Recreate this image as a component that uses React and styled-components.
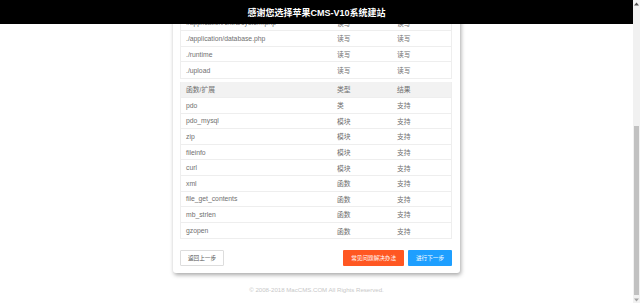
import React from "react";
import styled, { createGlobalStyle } from "styled-components";

const GlobalStyle = createGlobalStyle`
  html, body {
    margin: 0;
    padding: 0;
    background: #fff;
    overflow: hidden;
  }
  body {
    font-family: "Liberation Sans", "Noto Sans CJK SC", sans-serif;
  }
`;

const Page = styled.div`
  display: flex;
  width: 640px;
  height: 303px;
  overflow: hidden;
`;

const Main = styled.div`
  position: relative;
  flex: 1;
  display: flex;
  flex-direction: column;
  align-items: center;
  overflow: hidden;
`;

const TopBar = styled.div`
  position: absolute;
  top: 0;
  left: 0;
  right: 0;
  height: 24px;
  background: #000;
  color: #fff;
  display: flex;
  align-items: center;
  justify-content: center;
  font-size: 9px;
  font-weight: bold;
  z-index: 10;
`;

const Card = styled.div`
  width: 287px;
  box-sizing: border-box;
  background: #fff;
  padding: 15.6px 8px 7px 7px;
  border-radius: 0 0 3px 3px;
  box-shadow: 1px 2px 4px rgba(0, 0, 0, 0.35);
  display: flex;
  flex-direction: column;
`;

const Table = styled.div`
  display: flex;
  flex-direction: column;
  border: 1px solid #eee;
  border-top: none;
  margin-bottom: ${({ $gap }) => $gap || 0}px;
`;

const Row = styled.div`
  display: grid;
  grid-template-columns: 151px 60px 1fr;
  align-items: center;
  height: ${({ $head }) => ($head ? 16 : 15.6)}px;
  box-sizing: border-box;
  padding-left: 5px;
  border-bottom: 1px solid #eee;
  background: ${({ $head }) => ($head ? "#f2f2f2" : "#fff")};
  font-size: 6.8px;
  color: #707070;
  &:last-child {
    border-bottom: none;
  }
`;

const Cell = styled.span`
  white-space: nowrap;
`;

const Actions = styled.div`
  display: flex;
  align-items: center;
  gap: 4px;
  margin-top: -1px;
`;

const Button = styled.div`
  height: 16px;
  box-sizing: border-box;
  padding: 0 ${({ $pad }) => $pad}px;
  display: flex;
  align-items: center;
  font-size: 5.6px;
  border-radius: 1px;
  color: ${({ $tone }) => ($tone === "plain" ? "#555" : "#fff")};
  background: ${({ $tone }) =>
    $tone === "warm" ? "#ff5722" : $tone === "normal" ? "#1e9fff" : "#fff"};
  border: 1px solid ${({ $tone }) => ($tone === "plain" ? "#ddd" : "transparent")};
  margin-left: ${({ $push }) => ($push ? "auto" : "0")};
`;

const Footer = styled.div`
  margin-top: 13px;
  font-size: 6.1px;
  color: #c8c8c8;
`;

const ScrollBar = styled.div`
  width: 7px;
  background: #f1f1f1;
  display: flex;
  flex-direction: column;
  align-items: center;
`;

const Arrow = styled.div`
  height: 7px;
  display: flex;
  align-items: center;
  justify-content: center;
`;

const Track = styled.div`
  flex: 1;
  width: 100%;
  display: flex;
  flex-direction: column;
  justify-content: flex-end;
  align-items: center;
  padding-bottom: 1px;
`;

const Thumb = styled.div`
  width: 5px;
  height: 169px;
  background: #c1c1c1;
`;

const dirRows = [
  ["./application/extra/system.php", "读写", "读写"],
  ["./application/database.php", "读写", "读写"],
  ["./runtime", "读写", "读写"],
  ["./upload", "读写", "读写"],
];

const extRows = [
  ["pdo", "类", "支持"],
  ["pdo_mysql", "模块", "支持"],
  ["zip", "模块", "支持"],
  ["fileinfo", "模块", "支持"],
  ["curl", "模块", "支持"],
  ["xml", "函数", "支持"],
  ["file_get_contents", "函数", "支持"],
  ["mb_strlen", "函数", "支持"],
  ["gzopen", "函数", "支持"],
];

const Triangle = ({ up, color }) => (
  <svg width="5" height="4" viewBox="0 0 5 4">
    <polygon points={up ? "2.5,0.5 5,3.5 0,3.5" : "0,0.5 5,0.5 2.5,3.5"} fill={color} />
  </svg>
);

const App = () => (
  <Page>
    <GlobalStyle />
    <Main>
      <TopBar>感谢您选择苹果CMS-V10系统建站</TopBar>
      <Card>
        <Table $gap={3}>
          {dirRows.map((r) => (
            <Row key={r[0]}>
              <Cell>{r[0]}</Cell>
              <Cell>{r[1]}</Cell>
              <Cell>{r[2]}</Cell>
            </Row>
          ))}
        </Table>
        <Table $gap={12}>
          <Row $head>
            <Cell>函数/扩展</Cell>
            <Cell>类型</Cell>
            <Cell>结果</Cell>
          </Row>
          {extRows.map((r) => (
            <Row key={r[0]}>
              <Cell>{r[0]}</Cell>
              <Cell>{r[1]}</Cell>
              <Cell>{r[2]}</Cell>
            </Row>
          ))}
        </Table>
        <Actions>
          <Button $tone="plain" $pad={7}>返回上一步</Button>
          <Button $tone="warm" $pad={7} $push>常见问题解决办法</Button>
          <Button $tone="normal" $pad={7}>进行下一步</Button>
        </Actions>
      </Card>
      <Footer>© 2008-2018 MacCMS.COM All Rights Reserved.</Footer>
    </Main>
    <ScrollBar>
      <Arrow>
        <Triangle up color="#505050" />
      </Arrow>
      <Track>
        <Thumb />
      </Track>
      <Arrow>
        <Triangle color="#a3a3a3" />
      </Arrow>
    </ScrollBar>
  </Page>
);

export default App;
